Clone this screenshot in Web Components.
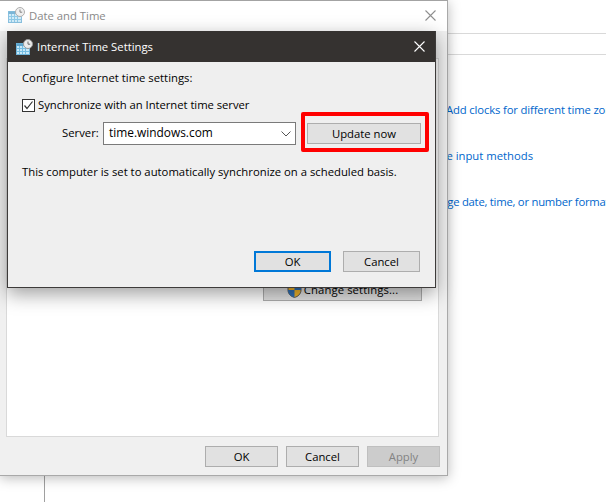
<!DOCTYPE html>
<html><head><meta charset="utf-8"><style>
html,body{margin:0;padding:0;background:#fff}
body{width:606px;height:502px;overflow:hidden;font-family:"Open Sans","Noto Sans",sans-serif;font-size:12px}
</style></head><body>
<win-desktop>
  <back-window slot="back"></back-window>
  <date-window slot="win"></date-window>
  <time-dialog slot="dlg"></time-dialog>
</win-desktop>
<script>
const FONT='font-family:"Open Sans","Noto Sans",sans-serif;font-size:11.3px;';
function def(name,html,init){
  customElements.define(name,class extends HTMLElement{
    constructor(){super();const r=this.attachShadow({mode:'open'});r.innerHTML=html;}
    connectedCallback(){if(init)init(this);}
  });
}
def('win-desktop',`<style>:host{display:block;position:relative;width:606px;height:502px;overflow:hidden;background:#fff}
::slotted(*){position:absolute}
::slotted(back-window){left:0;top:0;width:606px;height:502px}
::slotted(date-window){left:0;top:0;width:448px;height:476px}
::slotted(time-dialog){left:7px;top:31px;width:429px;height:257px}
</style><slot name="back"></slot><slot name="win"></slot><slot name="dlg"></slot>`);

def('time-icon',`<style>:host{display:inline-flex;width:17px;height:16px;flex:none}</style>
<svg width="17" height="16" viewBox="0 0 17 16">
<rect x="0.5" y="4.500" width="13" height="11" fill="#c8e8f8" stroke="#6fb4da"/>
<rect x="0.5" y="4.500" width="13" height="2.500" fill="#5ba3cc"/>
<path d="M3.500 7v8M6.500 7v8M9.500 7v8M1 9.500h12M1 12.500h12" stroke="#74bde2" stroke-width="1"/>
<circle cx="12" cy="5" r="4.500" fill="#ececec" stroke="#9a9a9a"/>
<path d="M12 2.500V5.200H14.200" fill="none" stroke="#666" stroke-width="1"/>
</svg>`);

def('x-glyph',`<style>:host{display:inline-flex;width:11px;height:11px;flex:none;color:inherit}</style>
<svg width="11" height="11" viewBox="0 0 11 11"><path d="M.5.500l10 10M10.500.500l-10 10" stroke="currentColor" stroke-width="1.100" fill="none"/></svg>`);

def('win-button',`<style>:host{display:inline-flex;align-items:center;justify-content:center;box-sizing:border-box;background:#e1e1e1;border:1px solid #adadad;color:#000;${FONT}line-height:1;flex:none}
:host([primary]){border:2px solid #0078d7}
:host([disabled]){background:#cccccc;border-color:#bfbfbf;color:#838383}
</style><slot></slot>`);

def('back-window',`<style>:host{display:block}
.rule{position:absolute;left:447px;right:0;height:1px;background:#d9d9d9}
.r1{top:33px}.r2{top:54px}
.vline{position:absolute;left:44px;top:470px;bottom:0;width:1px;background:#a0a0a0}
.links{position:absolute;left:0;top:101px;display:flex;flex-direction:column;gap:28px;color:#0066cc;${FONT}font-size:11.3px;line-height:18px;white-space:nowrap}
.links span{display:block}
</style>
<div class="rule r1"></div><div class="rule r2"></div><div class="vline"></div>
<div class="links">
<span style="margin-left:446px;letter-spacing:-.15px">Add clocks for different time zones</span>
<span style="margin-left:413px">Change input methods</span>
<span style="margin-left:421px;letter-spacing:-.25px">Change date, time, or number formats</span>
</div>`);

def('date-window',`<style>:host{display:flex;flex-direction:column;box-sizing:border-box;background:#f0f0f0;border-top:1px solid #a3a3a3;border-right:1px solid #a9a9a9;border-bottom:1px solid #a9a9a9;box-shadow:0 2px 12px rgba(0,0,0,.28);${FONT}}
.title{height:30px;background:#fff;display:flex;align-items:center;padding:0 11px 2px 8px;box-sizing:border-box;gap:4px;color:#8a8a8a;flex:none}
.title span{flex:1}
.title x-glyph{color:#8f8f8f}
.title time-icon{opacity:.8}
.panel{flex:none;height:379px;margin:27px 8px 0 6px;box-sizing:border-box;background:#fff;border:1px solid #d9d9d9;display:flex;justify-content:flex-end;align-items:flex-start}
.change{margin:220px 16px 0 0;width:159px;height:22px;box-sizing:border-box;gap:2px;letter-spacing:.1px}
.foot{display:flex;justify-content:flex-end;gap:8px;padding:9px 7px 0 0}
.foot win-button{width:73px;height:21px}
svg{flex:none}
</style>
<div class="title"><time-icon></time-icon><span>Date and Time</span><x-glyph></x-glyph></div>
<div class="panel"><win-button class="change"><svg width="15" height="16" viewBox="0 0 15 16"><path d="M7.500 1L14 3.500V8c0 4-3 6.500-6.500 7.500C4 14.500 1 12 1 8V3.500z" fill="#f0b429" stroke="#5a5a5a"/><path d="M7.500 1L14 3.500V8H7.500zM7.500 8V15.500C4 14.500 1 12 1 8z" fill="#2f6fb5"/></svg>Change settings...</win-button></div>
<div class="foot"><win-button>OK</win-button><win-button>Cancel</win-button><win-button disabled>Apply</win-button></div>`);

def('time-dialog',`<style>:host{display:flex;flex-direction:column;box-sizing:border-box;background:#efefef;border:1px solid #3d3b3a;border-top:0;box-shadow:0 6px 18px rgba(0,0,0,.38);color:#000;${FONT}}
.title{height:31px;flex:none;background:#353230;color:#fff;display:flex;align-items:center;gap:4px;padding:0 10px 0 8px}
.title span{flex:1}
.body{flex:1;display:flex;flex-direction:column;padding:7px 14px 15px 14px}
.line{line-height:18px;white-space:nowrap}
.check{display:flex;align-items:center;gap:3px;margin-top:9px;letter-spacing:-.05px}
.box{width:13px;height:13px;box-sizing:border-box;border:1px solid #333;background:#fff;display:flex;flex:none}
.srv{display:flex;align-items:center;margin-top:8px;height:23px}
.srv label{margin-left:40px;width:41px;padding-bottom:1px}
.select{width:193px;height:23px;box-sizing:border-box;border:1px solid #7a7a7a;background:#fff;display:flex;align-items:center;padding:0 4px 0 5px;font-size:11.9px}
.select span{flex:1;padding-bottom:3px}
.wrap{position:relative;margin-left:11px;flex:none;display:flex}
.update{width:114px;height:21px}
.mark{position:absolute;left:-6px;top:-11px;width:128px;height:40px;box-sizing:border-box;border:4px solid #ff0000;border-radius:2px}
.status{margin-top:18px}
.foot{margin-top:auto;display:flex;justify-content:flex-end;gap:12px;padding-right:1px}
.foot win-button{width:77px;height:21px}
</style>
<div class="title"><time-icon></time-icon><span>Internet Time Settings</span><x-glyph></x-glyph></div>
<div class="body">
<div class="line">Configure Internet time settings:</div>
<div class="line check"><span class="box"><svg width="11" height="11" viewBox="0 0 11 11"><path d="M1.500 5.500L4 8.500 9.500 1.500" fill="none" stroke="#333" stroke-width="1.200"/></svg></span>Synchronize with an Internet time server</div>
<div class="srv line"><label>Server:</label><div class="select"><span>time.windows.com</span><svg width="10" height="6" viewBox="0 0 10 6"><path d="M.5.500L5 5 9.500.500" fill="none" stroke="#555"/></svg></div>
<div class="wrap"><win-button class="update">Update now</win-button><div class="mark"></div></div></div>
<div class="line status">This computer is set to automatically synchronize on a scheduled basis.</div>
<div class="foot"><win-button primary>OK</win-button><win-button>Cancel</win-button></div>
</div>`);
</script>
</body></html>
